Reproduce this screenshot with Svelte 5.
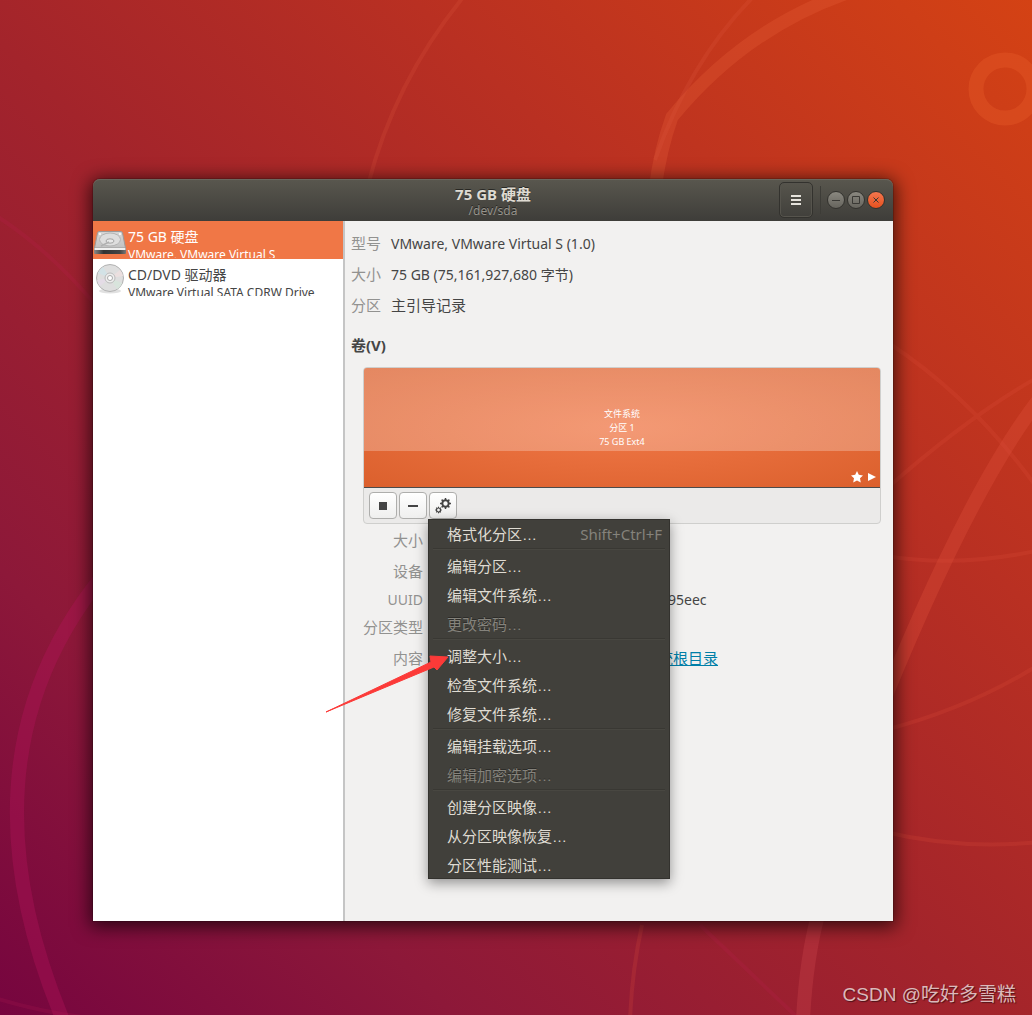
<script>
  const menu = [
    [{ label: '格式化分区…', keys: 'Shift+Ctrl+F' }],
    [{ label: '编辑分区…' }, { label: '编辑文件系统…' }, { label: '更改密码…', off: true }],
    [{ label: '调整大小…' }, { label: '检查文件系统…' }, { label: '修复文件系统…' }],
    [{ label: '编辑挂载选项…' }, { label: '编辑加密选项…', off: true }],
    [{ label: '创建分区映像…' }, { label: '从分区映像恢复…' }, { label: '分区性能测试…' }],
  ];
  const teeth = [0, 45, 90, 135, 180, 225, 270, 315];
</script>

<div class="desktop">
  <svg class="wallpaper" viewBox="0 0 1032 1015" preserveAspectRatio="none" aria-hidden="true">
    <g fill="none">
      <path d="M655 190Q660 150 672 117Q745 28 850 -8" stroke="#e8623a" stroke-opacity=".28" stroke-width="13" />
      <path d="M368 185Q395 80 465 -5M655 160Q690 60 755 -5" stroke="#e05a40" stroke-opacity=".2" stroke-width="4" />
      <circle cx="1005" cy="89" r="29" stroke="#e65a28" stroke-opacity=".4" stroke-width="15" />
      <path d="M1040 398Q965 495 870 735" stroke="#e0503c" stroke-opacity=".32" stroke-width="14" />
      <path d="M818 915Q806 960 803 1020" stroke="#d04850" stroke-opacity=".3" stroke-width="14" />
      <path d="M890 344Q975 400 1040 492M1040 376Q970 415 885 490M885 556Q960 568 1040 550M885 730Q970 708 1040 664M885 832Q960 850 1040 842M642 925Q632 970 630 1020" stroke="#e0503c" stroke-opacity=".2" stroke-width="4" />
      <path d="M140 535Q-60 730 65 1025" stroke="#b3145c" stroke-opacity=".36" stroke-width="14" />
      <path d="M-5 215Q50 250 100 310M-5 998Q40 1012 90 1018M700 925L800 1020" stroke="#c0205a" stroke-opacity=".16" stroke-width="4" />
    </g>
  </svg>

  <main class="window">
    <header>
      <div class="title">
        <h1>75 GB 硬盘</h1>
        <p>/dev/sda</p>
      </div>
      <div class="controls">
        <button class="burger" aria-label="菜单"><svg width="12" height="12" viewBox="0 0 12 12"><path d="M1 1h10v2H1zM1 5h10v2H1zM1 9h10v2H1z" fill="#e6e3dc" /></svg></button>
        <span class="rule"></span>
        <button class="dot" aria-label="最小化"><svg viewBox="0 0 16 16"><path d="M4 8.500h8" /></svg></button>
        <button class="dot" aria-label="最大化"><svg viewBox="0 0 16 16"><path d="M4.500 4.500h7v7h-7z" /></svg></button>
        <button class="dot close" aria-label="关闭"><svg viewBox="0 0 16 16"><path d="M5.500 5.500l5 5M10.500 5.500l-5 5" /></svg></button>
      </div>
    </header>

    <div class="body">
      <nav aria-label="设备">
        <button class="device active">
          <svg width="34" height="34" viewBox="0 0 34 34">
            <defs>
              <linearGradient id="metal" x2="0" y2="1"><stop stop-color="#d6d6d6" /><stop offset="1" stop-color="#c2c2c2" /></linearGradient>
              <linearGradient id="front"><stop stop-color="#8a8a8a" /><stop offset=".3" stop-color="#333" /><stop offset=".8" stop-color="#444" /><stop offset="1" stop-color="#777" /></linearGradient>
            </defs>
            <path d="M6 6.500h22q1 0 1.500 1.500L32.500 23h-31L4.500 8Q5 6.500 6 6.500z" fill="url(#metal)" stroke="#9a9a9a" />
            <path d="M1 23h32v5q0 1-1 1H2q-1 0-1-1z" fill="url(#front)" />
            <path d="M1.500 24h31" stroke="#f0f0f0" stroke-width="2" />
            <ellipse cx="17" cy="14.500" rx="10.500" ry="6.500" fill="#dedede" stroke="#b4b4b4" />
            <ellipse cx="17" cy="16" rx="4" ry="2.200" fill="#e8e8e8" stroke="#a4a4a4" />
            <path d="M8 21l8-4" stroke="#b0b0b0" stroke-width="1.500" />
            <circle cx="7" cy="9" r="1" fill="#fff" /><circle cx="27" cy="9" r="1" fill="#fff" />
          </svg>
          <span class="text"><span class="name">75 GB 硬盘</span><span class="sub">VMware, VMware Virtual S</span></span>
        </button>
        <button class="device">
          <svg width="34" height="34" viewBox="0 0 34 34">
            <ellipse cx="17" cy="28" rx="11" ry="2.500" fill="#000" opacity=".12" />
            <circle cx="17" cy="15" r="13.500" fill="#dedede" stroke="#b2b2b2" />
            <path d="M17 15L5 10Q7 6 10 4z" fill="#d3e2e6" /><path d="M17 15L29 20Q27 25 24 26z" fill="#d8e4dc" />
            <path d="M17 15L4 17Q5 21 7 23z" fill="#e4dce6" /><path d="M17 15L30 13Q29 9 27 7z" fill="#ebdfdf" />
            <circle cx="17" cy="15" r="5" fill="#eee" stroke="#bbb" />
            <circle cx="17" cy="15" r="2.500" fill="#fff" stroke="#aaa" />
          </svg>
          <span class="text"><span class="name">CD/DVD 驱动器</span><span class="sub">VMware Virtual SATA CDRW Drive</span></span>
        </button>
      </nav>

      <section class="pane">
        <dl class="info">
          <dt>型号</dt><dd>VMware, VMware Virtual S (1.0)</dd>
          <dt>大小</dt><dd>75 GB (75,161,927,680 字节)</dd>
          <dt>分区</dt><dd class="han">主引导记录</dd>
        </dl>
        <h2>卷(V)</h2>

        <div class="volumes">
          <div class="partition">
            <p>文件系统<br />分区 1<br />75 GB Ext4</p>
            <div class="marks">
              <svg width="12" height="12" viewBox="0 0 12 12"><path d="M6 0l1.800 3.800 4.200.6-3 2.900.8 4.200L6 9.500l-3.800 2 .8-4.200-3-2.900 4.200-.6z" fill="#fff" /></svg>
              <svg width="8" height="8" viewBox="0 0 8 8"><path d="M0 0l8 4-8 4z" fill="#fff" /></svg>
            </div>
          </div>
          <div class="toolbar">
            <button aria-label="卸载"><svg width="16" height="16" viewBox="0 0 16 16"><path d="M4 4h8v8H4z" fill="#444" /></svg></button>
            <button aria-label="删除分区"><svg width="16" height="16" viewBox="0 0 16 16"><path d="M3 7h10v2H3z" fill="#444" /></svg></button>
            <div class="anchor">
              <button aria-label="更多操作" aria-expanded="true">
                <svg width="16" height="16" viewBox="0 0 16 16" fill="none" stroke="#444">
                  <circle cx="10.500" cy="5.500" r="3.200" stroke-width="2" />
                  {#each teeth as a}<path d="M10.500 0v2" stroke-width="1.500" transform="rotate({a} 10.500 5.500)" />{/each}
                  <circle cx="3.500" cy="12" r="2" stroke-width="1.200" />
                  {#each teeth as a}<path d="M3.500 8.700v1.300" transform="rotate({a} 3.500 12)" />{/each}
                </svg>
              </button>
              <div class="menu" role="menu">
                {#each menu as group}
                  <div class="group" role="group">
                    {#each group as item}
                      <button role="menuitem" disabled={item.off}>
                        <span>{item.label}</span>{#if item.keys}<kbd>{item.keys}</kbd>{/if}
                      </button>
                    {/each}
                  </div>
                {/each}
              </div>
              <svg class="arrow" width="124" height="60" viewBox="0 0 124 60" aria-hidden="true"><path d="M1 58L106 8 105 2 123 3 112 16 109 13z" fill="#fc3a38" stroke="#fc3a38" stroke-linejoin="round" /></svg>
            </div>
          </div>
        </div>

        <dl class="details">
          <dt>大小</dt><dd></dd>
          <dt>设备</dt><dd></dd>
          <dt class="latin">UUID</dt><dd class="latin uuid">95eec</dd>
          <dt>分区类型</dt><dd></dd>
          <dt>内容</dt><dd class="mount"><a href="#root">统根目录</a></dd>
        </dl>
      </section>
    </div>
  </main>
  <footer>CSDN @吃好多雪糕</footer>
</div>

<style>
  :global(body) { margin: 0; }
  * { box-sizing: border-box; }
  h1, h2, p, dl, dd { margin: 0; }
  button { font: inherit; color: inherit; padding: 0; margin: 0; border: 0; background: none; }
  .desktop {
    position: relative;
    display: flex;
    flex-direction: column;
    min-height: 100vh;
    padding: 179px 139px 0 93px;
    overflow: hidden;
    background: linear-gradient(to top right, #76053f 0%, #8d1839 22%, #a3242b 48%, #b93022 70%, #d44214 100%);
    font: 14px/20px "Noto Sans", "Noto Sans CJK SC", sans-serif;
    color: #454545;
  }
  .wallpaper { position: absolute; inset: 0; width: 100%; height: 100%; }
  .window {
    position: relative;
    flex: 1;
    display: flex;
    flex-direction: column;
    border-radius: 7px 7px 0 0;
    box-shadow: 0 3px 18px 3px rgba(0, 0, 0, .65), 0 0 0 1px rgba(0, 0, 0, .15);
  }
  header {
    display: grid;
    grid-template-columns: 1fr auto 1fr;
    align-items: center;
    height: 42px;
    border-radius: 7px 7px 0 0;
    background: linear-gradient(#59574e, #3e3d39);
    box-shadow: inset 0 1px #69665d;
    text-align: center;
  }
  .title { grid-column: 2; padding-top: 4px; text-shadow: 0 -1px rgba(0, 0, 0, .5); }
  h1 { font-size: 15px; line-height: 18px; color: #dfdbd2; }
  .title p { font-size: 12px; line-height: 16px; color: #96938b; }
  .controls { display: flex; justify-content: flex-end; align-items: center; gap: 2px; padding-right: 8px; }
  .burger {
    display: grid;
    place-items: center;
    width: 34px;
    height: 36px;
    border: 1px solid #33322e;
    border-radius: 5px;
    box-shadow: inset 0 0 0 1px #56544d;
  }
  .rule { width: 1px; height: 28px; margin: 0 4px 0 5px; background: #3d3c37; }
  .dot {
    display: grid;
    width: 18px;
    height: 18px;
    border: 1px solid #33322e;
    border-radius: 50%;
    background: linear-gradient(#8a8880, #66645d);
  }
  .dot svg { width: 16px; height: 16px; fill: none; stroke: #3a3935; }
  .close { background: linear-gradient(#f4764e, #e6511f); }
  .body { flex: 1; display: flex; }
  nav { flex: 0 0 252px; border-right: 2px solid #c5c5c5; background: #fff; }
  .device { display: flex; width: 100%; height: 38px; overflow: hidden; text-align: left; }
  .device svg { flex: none; margin-top: 4px; }
  .device .text { display: block; padding: 5px 0 0 1px; height: 37px; overflow: hidden; white-space: nowrap; }
  .name, .sub { display: block; }
  .name { line-height: 22px; }
  .sub { font-size: 12px; line-height: 14px; }
  .active { background: #f07746; color: #fff; }
  .pane { flex: 1; padding: 7px 12px 0 6px; background: #f2f1f0; }
  .info { display: grid; grid-template-columns: 30px 1fr; column-gap: 10px; line-height: 31px; }
  dt { font-size: 15px; color: #929290; }
  .han { font-size: 15px; }
  h2 { margin-top: 14px; font-size: 15px; line-height: 20px; }
  .volumes { margin: 12px 0 0 12px; border: 1px solid #cfcfcd; border-radius: 4px; background: #ebeae9; }
  .partition {
    position: relative;
    display: grid;
    place-items: center;
    height: 120px;
    border-bottom: 1px solid #4b4b4b;
    border-radius: 3px 3px 0 0;
    background:
      linear-gradient(rgba(255, 255, 255, .25) 83px, transparent 83px),
      radial-gradient(ellipse at center, #f07746, #db602d);
    color: #fff;
    font-size: 9px;
    line-height: 14px;
    text-align: center;
  }
  .marks { position: absolute; right: 4px; bottom: 4px; display: flex; align-items: center; gap: 5px; }
  .toolbar { display: flex; gap: 2px; padding: 4px 5px; }
  .toolbar > button, .anchor > button {
    display: grid;
    place-items: center;
    width: 28px;
    height: 27px;
    border: 1px solid #aeaeac;
    border-radius: 4px;
    background: linear-gradient(#fff, #efefee);
  }
  .anchor { position: relative; }
  .menu {
    position: absolute;
    top: 27px;
    left: -1px;
    width: 242px;
    padding: 0 5px;
    background: #41403b;
    box-shadow: inset 0 0 0 1px #33322e, 0 4px 12px rgba(0, 0, 0, .4);
    color: #dfdbd2;
    font-family: "Liberation Sans", "Noto Sans CJK SC", sans-serif;
    font-size: 15px;
  }
  .menu button { display: flex; justify-content: space-between; width: 100%; height: 29px; padding: 0 3px 0 14px; line-height: 31px; text-align: left; }
  .menu button:disabled { color: #85837c; text-shadow: 0 -1px #2d2c29; }
  .group + .group { border-top: 1px solid #393833; box-shadow: inset 0 1px #484741; padding-top: 2px; }
  kbd { font-family: "Noto Sans", sans-serif; font-size: 15px; color: #85837c; }
  .arrow { position: absolute; top: 162px; left: -104px; }
  .details { display: grid; grid-template-columns: 60px 1fr; column-gap: 9px; margin: 1px 0 0 12px; line-height: 31px; }
  .details dt { text-align: right; white-space: nowrap; }
  .details .latin { font-size: 14px; line-height: 25px; }
  .uuid { padding-left: 236px; }
  .mount { padding-left: 226px; font-size: 15px; }
  a { color: #007fa8; }
  footer {
    position: relative;
    height: 94px;
    margin-right: -123px;
    padding-top: 60px;
    font-family: "Liberation Sans", "Noto Sans CJK SC", sans-serif;
    font-size: 19px;
    line-height: 28px;
    text-align: right;
    color: #dcb9bb;
    text-shadow: 1px 1px 1px rgba(0, 0, 0, .5);
  }
</style>
